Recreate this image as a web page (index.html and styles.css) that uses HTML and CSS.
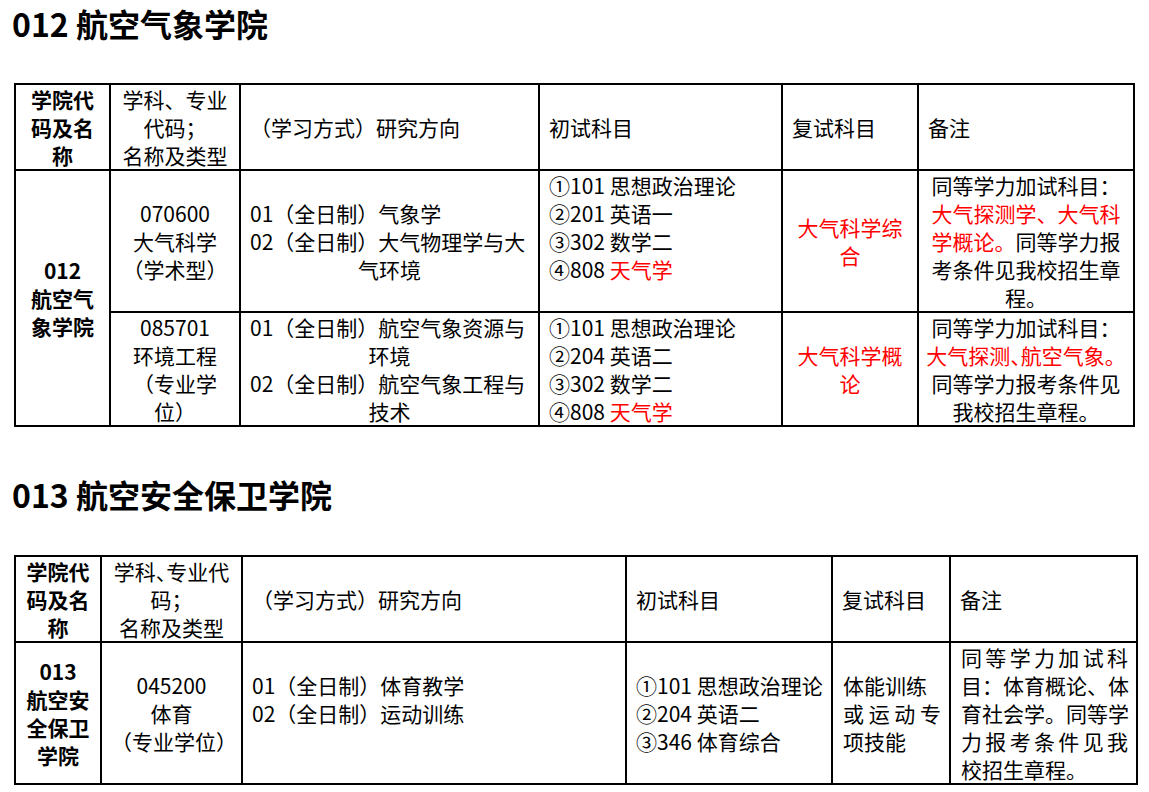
FILE: index.html
```html
<!DOCTYPE html>
<html lang="zh-CN">
<head>
<meta charset="utf-8">
<title>航空气象学院 / 航空安全保卫学院</title>
<link rel="stylesheet" href="styles.css">
</head>
<body>
<h1 class="title">012 航空气象学院</h1>
<table class="grid t1">
  <colgroup>
    <col class="w95"><col class="w130"><col class="w299"><col class="w243"><col class="w136"><col class="w216">
  </colgroup>
  <tr class="h86">
    <td class="center bold">学院代<br>码及名<br>称</td>
    <td class="center">学科、专业<br>代码；<br>名称及类型</td>
    <td>（学习方式）研究方向</td>
    <td>初试科目</td>
    <td>复试科目</td>
    <td>备注</td>
  </tr>
  <tr class="h142">
    <td class="center bold" rowspan="2">012<br>航空气<br>象学院</td>
    <td class="center">070600<br>大气科学<br>（学术型）</td>
    <td>
      <div>01（全日制）气象学</div>
      <div>02（全日制）大气物理学与大</div>
      <div class="center">气环境</div>
    </td>
    <td class="top nowrap">①101 思想政治理论<br>②201 英语一<br>③302 数学二<br>④808 <span class="red">天气学</span></td>
    <td class="center red">大气科学综合</td>
    <td class="center nowrap note">同等学力加试科目：<br><span class="red">大气探测学、大气科</span><br><span class="red">学概论。</span>同等学力报<br>考条件见我校招生章<br>程。</td>
  </tr>
  <tr class="h114">
    <td class="center">085701<br>环境工程<br>（专业学<br>位）</td>
    <td>
      <div>01（全日制）航空气象资源与</div>
      <div class="center">环境</div>
      <div>02（全日制）航空气象工程与</div>
      <div class="center">技术</div>
    </td>
    <td class="nowrap">①101 思想政治理论<br>②204 英语二<br>③302 数学二<br>④808 <span class="red">天气学</span></td>
    <td class="center red">大气科学概<br>论</td>
    <td class="center nowrap note">同等学力加试科目：<br><span class="red">大气探测<span class="half">、</span>航空气象。</span><br>同等学力报考条件见<br>我校招生章程。</td>
  </tr>
</table>

<h1 class="title second">013 航空安全保卫学院</h1>
<table class="grid t2">
  <colgroup>
    <col class="w86"><col class="w141"><col class="w384"><col class="w206"><col class="w118"><col class="w187">
  </colgroup>
  <tr class="h85">
    <td class="center bold">学院代<br>码及名<br>称</td>
    <td class="center nowrap">学科<span class="half">、</span>专业代<br>码；<br>名称及类型</td>
    <td>（学习方式）研究方向</td>
    <td>初试科目</td>
    <td>复试科目</td>
    <td>备注</td>
  </tr>
  <tr class="h142">
    <td class="center bold">013<br>航空安<br>全保卫<br>学院</td>
    <td class="center nowrap">045200<br>体育<br>（专业学位）</td>
    <td class="pad-last">01（全日制）体育教学<br>02（全日制）运动训练</td>
    <td class="nowrap">①101 思想政治理论<br>②204 英语二<br>③346 体育综合</td>
    <td class="tight">
      <div>体能训练</div>
      <div class="just">或运动专</div>
      <div>项技能</div>
    </td>
    <td class="tight nowrap">
      <div class="just">同等学力加试科</div>
      <div class="just">目：体育概论、体</div>
      <div class="just">育社会学。同等学</div>
      <div class="just">力报考条件见我</div>
      <div>校招生章程。</div>
    </td>
  </tr>
</table>
</body>
</html>
```
FILE: styles.css
```css
html, body {
  background: #ffffff;
}
body {
  margin: 0;
  padding: 0 0 0 12px;
  font-family: "Noto Sans CJK SC", "Noto Sans", sans-serif;
  color: #000000;
}
.title {
  margin: 0;
  font-size: 32px;
  line-height: 46px;
  font-weight: 700;
}
.title.second {
  margin-top: 44px;
}
.grid {
  margin: 37px 0 0 2px;
  border-collapse: collapse;
  table-layout: fixed;
  font-size: 21px;
  line-height: 28px;
}
.t2 { margin-top: 38px; }
.t1 { width: 1121px; }
.t2 { width: 1124px; }
.grid td {
  border: 2px solid #000000;
  padding: 0 9px;
  vertical-align: middle;
  text-align: left;
  font-weight: 400;
}
.w95 { width: 95px; }
.w130 { width: 130px; }
.w299 { width: 299px; }
.w243 { width: 243px; }
.w136 { width: 136px; }
.w216 { width: 216px; }
.w86 { width: 86px; }
.w141 { width: 141px; }
.w384 { width: 384px; }
.w206 { width: 206px; }
.w118 { width: 118px; }
.w187 { width: 187px; }

.h86 { height: 86px; }
.h85 { height: 84px; }
.h142 { height: 141px; }
.h114 { height: 114px; }

.grid td.center, .grid .center { text-align: center; }
.grid td.bold { font-weight: 700; }
.grid td.top { vertical-align: top; }
.grid td.note { padding: 0 6px; }
.grid td.tight { padding: 0 8px 0 10px; }
.grid td.pad-last { padding-bottom: 28px; }
.nowrap { white-space: nowrap; }
.red { color: #ff0000; }
.half { font-feature-settings: "halt" 1; }
.just {
  text-align: justify;
  text-align-last: justify;
}
```
